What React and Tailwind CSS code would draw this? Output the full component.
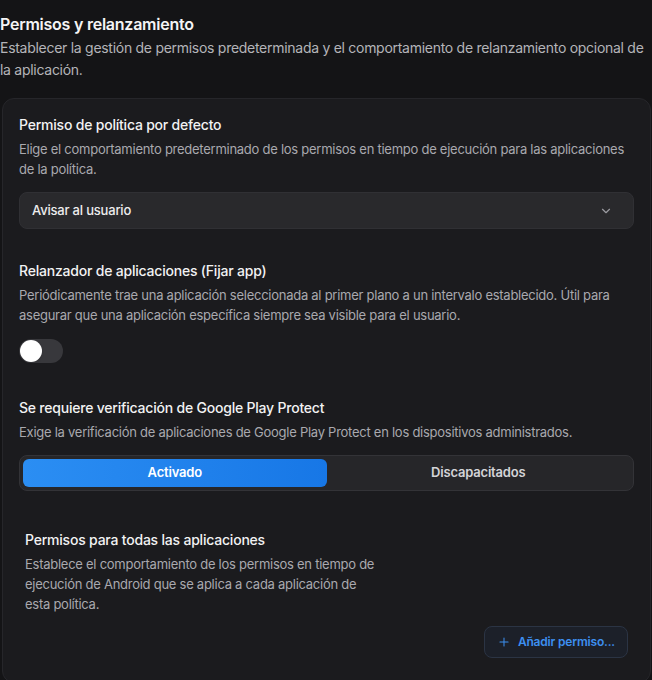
import React, { useState } from "react";
import { ChevronDown, Plus } from "lucide-react";

const font = { fontFamily: "Inter, 'Noto Sans', sans-serif" };

const Section = ({ title, desc, children }) => (
  <div>
    <h3 className="text-[14px] leading-5 font-medium tracking-[-0.015em] text-[#f2f2f3]">{title}</h3>
    <p className="mt-1 text-[13px] leading-[20px] tracking-[-0.02em] text-[#a9a9ae]">{desc}</p>
    {children}
  </div>
);

export default function App() {
  const [relaunch, setRelaunch] = useState(false);
  const [protect, setProtect] = useState(true);

  return (
    <div style={font} className="min-h-[680px] w-[652px] bg-[#141416] pt-3 pb-[2px]">
      {/* Cabecera */}
      <h2 className="text-[16px] leading-6 font-semibold tracking-[-0.015em] text-[#f4f4f5]">Permisos y relanzamiento</h2>
      <p className="mt-[1px] text-[14px] leading-[22px] tracking-[-0.02em] text-[#b4b4b9]">
        Establecer la gestión de permisos predeterminada y el comportamiento de relanzamiento opcional de
        la aplicación.
      </p>

      {/* Tarjeta */}
      <div className="mt-[17px] ml-[2px] mr-[1px] rounded-xl border border-[#26262a] bg-[#1b1b1e] px-4 pt-4 pb-6">
        <Section
          title="Permiso de política por defecto"
          desc="Elige el comportamiento predeterminado de los permisos en tiempo de ejecución para las aplicaciones de la política."
        >
          <button className="mt-[13px] flex h-[37px] w-full items-center justify-between rounded-lg border border-[#303034] bg-[#29292c] px-3 text-left">
            <span className="text-[13px] font-medium tracking-[-0.015em] text-[#ededee]">Avisar al usuario</span>
            <ChevronDown size={14} className="mr-2 text-[#9a9aa0]" />
          </button>
        </Section>

        <div className="mt-8">
          <Section
            title="Relanzador de aplicaciones (Fijar app)"
            desc="Periódicamente trae una aplicación seleccionada al primer plano a un intervalo establecido. Útil para asegurar que una aplicación específica siempre sea visible para el usuario."
          >
            <button
              onClick={() => setRelaunch(!relaunch)}
              className={`mt-[14px] flex h-6 w-11 items-center rounded-full px-[1px] ${
                relaunch ? "justify-end bg-[#1a7fea]" : "justify-start bg-[#38383c]"
              }`}
            >
              <span className="h-[22px] w-[22px] rounded-full bg-white shadow-sm" />
            </button>
          </Section>
        </div>

        <div className="mt-[35px]">
          <Section
            title="Se requiere verificación de Google Play Protect"
            desc="Exige la verificación de aplicaciones de Google Play Protect en los dispositivos administrados."
          >
            <div className="mt-[13px] grid h-[36px] grid-cols-2 rounded-lg border border-[#333337] bg-[#262629] p-[3px]">
              <button
                onClick={() => setProtect(true)}
                className={`rounded-md text-[13px] font-semibold tracking-[-0.015em] ${
                  protect ? "bg-gradient-to-r from-[#2b8ef3] to-[#1777e6] text-white" : "text-[#d4d4d8]"
                }`}
              >
                Activado
              </button>
              <button
                onClick={() => setProtect(false)}
                className={`rounded-md text-[13px] font-semibold tracking-[-0.015em] ${
                  !protect ? "bg-gradient-to-r from-[#2b8ef3] to-[#1777e6] text-white" : "text-[#d4d4d8]"
                }`}
              >
                Discapacitados
              </button>
            </div>
          </Section>
        </div>

        {/* Permisos globales */}
        <div className="mt-[39px] px-[6px]">
          <h3 className="text-[14px] leading-5 font-medium tracking-[-0.015em] text-[#f2f2f3]">Permisos para todas las aplicaciones</h3>
          <p className="mt-1 max-w-[354px] text-[13px] leading-[20px] tracking-[-0.02em] text-[#a9a9ae]">
            Establece el comportamiento de los permisos en tiempo de ejecución de Android que se aplica a cada aplicación de esta política.
          </p>
          <div className="mt-3 flex justify-end">
            <button className="flex h-[32px] items-center gap-[7px] rounded-lg border border-[#2b3444] bg-[#1c2029] px-3 text-[12px] font-semibold tracking-[-0.015em] text-[#3d8ff0]">
              <Plus size={14} strokeWidth={1.75} />
              Añadir permiso...
            </button>
          </div>
        </div>
      </div>
    </div>
  );
}
